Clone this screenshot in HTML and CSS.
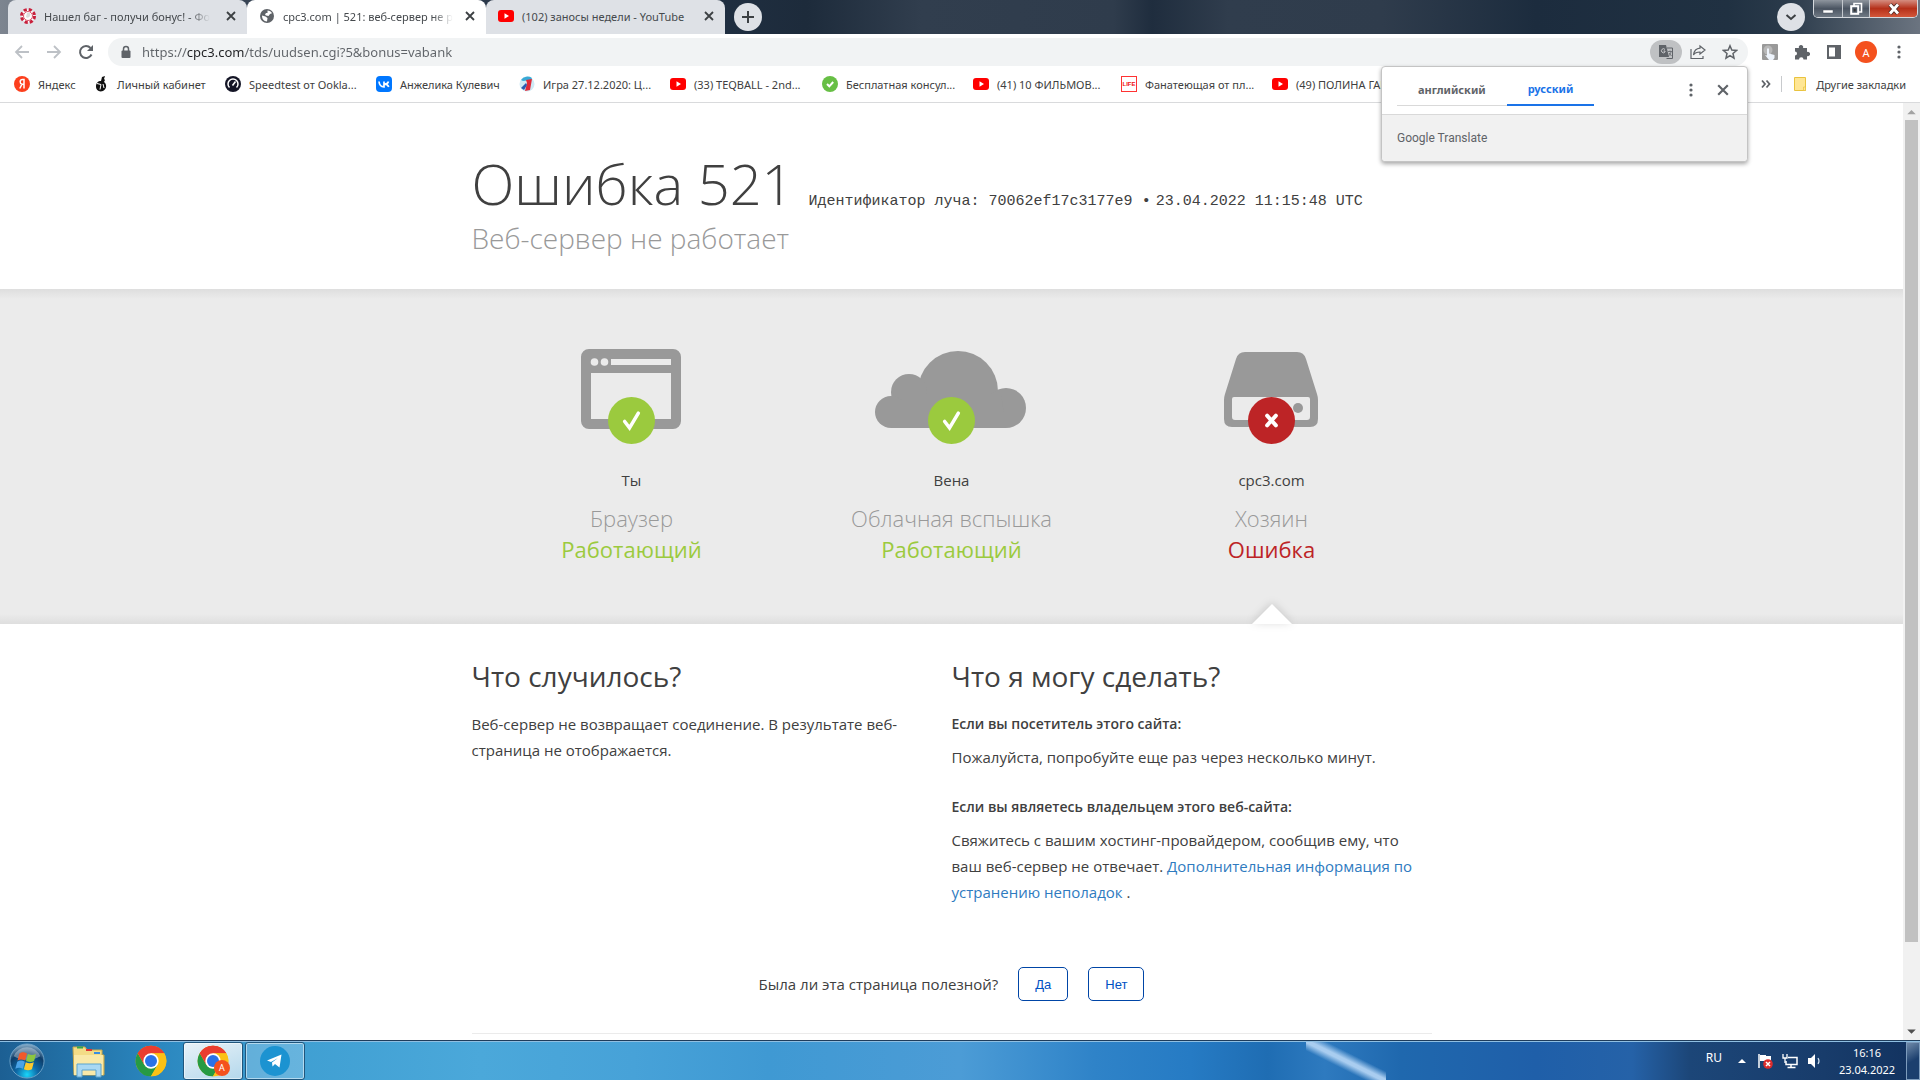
FILE: index.html
```html
<!DOCTYPE html>
<html lang="ru">
<head>
<meta charset="utf-8">
<title>cpc3.com | 521: веб-сервер не работает</title>
<link rel="stylesheet" href="styles.css">
</head>
<body>
<svg class="defs" aria-hidden="true">
  <symbol id="yt" viewBox="0 0 16 16"><rect y="2" width="16" height="12" rx="3" fill="#f00"/><path d="M6.500 5.300v5.400L11 8z" fill="#fff"/></symbol>
  <symbol id="close" viewBox="0 0 10 10"><path d="M1 1l8 8M9 1L1 9" stroke="currentColor" stroke-width="1.800" fill="none"/></symbol>
  <symbol id="dots" viewBox="0 0 4 16"><circle cx="2" cy="3" r="1.600"/><circle cx="2" cy="8" r="1.600"/><circle cx="2" cy="13" r="1.600"/></symbol>
  <symbol id="chrome" viewBox="0 0 48 48">
    <circle cx="24" cy="24" r="23" fill="#fbc116"/>
    <path d="M4.080 12.500A23 23 0 0 1 43.920 12.500H24z" fill="#ea3d2f"/>
    <path d="M4.080 12.500A23 23 0 0 0 24 47l9.960-17.250L24 24 14.040 29.750z" fill="#269a43"/>
    <path d="M4.080 12.500L14.040 29.750 24 12.500H43.920A23 23 0 0 0 4.080 12.500z" fill="#ea3d2f"/>
    <path d="M24 12.500H43.920A23 23 0 0 1 24 47l9.960-17.250z" fill="#fbc116"/>
    <circle cx="24" cy="24" r="11.500" fill="#fff"/><circle cx="24" cy="24" r="9" fill="#2a72e8"/>
  </symbol>
  <symbol id="ok" viewBox="0 0 48 48"><circle cx="24" cy="24" r="24" fill="#9bca3e"/><path d="M17 25l5 6.500L31 16.500" fill="none" stroke="#fff" stroke-width="3.600" stroke-linecap="round"/></symbol>
</svg>

<header class="browser">
  <div class="tabstrip">
    <div class="tabs" role="tablist">
      <div class="tab" role="tab">
        <svg class="ico" viewBox="0 0 16 16"><circle cx="8" cy="8" r="6.500" fill="#fff" stroke="#c8203c" stroke-width="3" stroke-dasharray="3.100 2"/><circle cx="8" cy="8" r="4.500" fill="#fff" stroke="#d8546a"/><path d="M7 5c3-1 4 1 3 3s-3 2-4 1" fill="#ddd"/></svg>
        <span class="tab-title fade">Нашел баг - получи бонус! - Фо</span>
        <button class="icon-btn" aria-label="Закрыть"><svg class="x"><use href="#close"/></svg></button>
      </div>
      <div class="tab active" role="tab">
        <svg class="ico" viewBox="0 0 16 16"><circle cx="8" cy="8" r="7" fill="#5f6368"/><path d="M8.500 2.500c2 0 3.500 1 4.500 2.800l-2 .7-1.500 2-2.500-.5L6 6.500l1-1.500h1.500zM3 7.500l3.500 1 2 1.500-.5 3.500c-3-.2-5-2.500-5-6z" fill="#fff"/></svg>
        <span class="tab-title fade">cpc3.com | 521: веб-сервер не р</span>
        <button class="icon-btn" aria-label="Закрыть"><svg class="x"><use href="#close"/></svg></button>
      </div>
      <div class="tab" role="tab">
        <svg class="ico"><use href="#yt"/></svg>
        <span class="tab-title">(102) заносы недели - YouTube</span>
        <button class="icon-btn" aria-label="Закрыть"><svg class="x"><use href="#close"/></svg></button>
      </div>
    </div>
    <button class="round-btn" aria-label="Новая вкладка"><svg class="s12" viewBox="0 0 12 12"><path d="M6 0v12M0 6h12" stroke="#3c4043" stroke-width="2"/></svg></button>
    <span class="spacer"></span>
    <button class="round-btn" aria-label="Поиск вкладок"><svg class="s12" viewBox="0 0 12 12"><path d="M1.500 4L6 8l4.500-4" fill="none" stroke="#3c4043" stroke-width="2"/></svg></button>
    <div class="win-controls">
      <button class="win" aria-label="Свернуть"><svg class="s16" viewBox="0 0 16 16"><rect x="3" y="9" width="10" height="3" fill="#fff" stroke="#4a525c" stroke-width=".5"/></svg></button>
      <button class="win mid" aria-label="Развернуть"><svg class="s16" viewBox="0 0 16 16" fill="none"><path d="M6 5V2.500h7.500V11H11" stroke="#fff" stroke-width="1.600"/><rect x="3.200" y="5.200" width="7" height="7.600" stroke="#fff" stroke-width="2"/><rect x="5.700" y="8" width="2" height="2.500" fill="#333"/></svg></button>
      <button class="win quit" aria-label="Закрыть окно"><svg class="s16" viewBox="0 0 16 16"><path d="M4 3.500l8 9M12 3.500l-8 9" stroke="#4b2a26" stroke-width="4.500"/><path d="M4 3.500l8 9M12 3.500l-8 9" stroke="#fff" stroke-width="2.800"/></svg></button>
    </div>
  </div>

  <div class="toolbar">
    <button class="icon-btn nav dim" aria-label="Назад"><svg class="s16" viewBox="0 0 16 16"><path d="M15 8H2M8 2L2 8l6 6" fill="none" stroke="currentColor" stroke-width="1.800"/></svg></button>
    <button class="icon-btn nav dim" aria-label="Вперед"><svg class="s16" viewBox="0 0 16 16"><path d="M1 8h13M8 2l6 6-6 6" fill="none" stroke="currentColor" stroke-width="1.800"/></svg></button>
    <button class="icon-btn nav" aria-label="Обновить"><svg class="s16" viewBox="0 0 16 16"><path d="M13.500 10.500A6 6 0 1 1 12.500 4" fill="none" stroke="currentColor" stroke-width="2"/><path d="M15 1v6H9z" fill="currentColor"/></svg></button>
    <div class="omnibox">
      <svg class="lock" viewBox="0 0 10 14"><path d="M2.500 6V4a2.500 2.500 0 0 1 5 0v2" fill="none" stroke="#5f6368" stroke-width="1.500"/><rect x="0.500" y="5.500" width="9" height="7.500" rx="1" fill="#5f6368"/></svg>
      <input class="url" type="text" aria-label="Адресная строка" value="https://cpc3.com/tds/uudsen.cgi?5&amp;bonus=vabank">
      <button class="icon-btn translate" aria-label="Перевести"><svg class="s16" viewBox="0 0 16 16"><path d="M1 1h7l3 12H1z" fill="#5f6368"/><path d="M9 4h5.500v10.500H8.500" fill="none" stroke="#5f6368"/><path d="M7 5.500A2 2 0 1 0 7 8V7H5.500" fill="none" stroke="#c9cacc"/><path d="M10 7.500h4M12 6.500v1.200M13 8c-.5 2-1.500 3-2.500 4M11 9l2.500 3" fill="none" stroke="#5f6368" stroke-width=".8"/></svg></button>
      <button class="icon-btn" aria-label="Поделиться"><svg class="s16" viewBox="0 0 16 16"><path d="M1 5v9.500h12V12M10 2l5 4-5 4V8c-3 0-5 .5-6.500 3C4 7 6 4.500 10 4.200z" fill="none" stroke="#5f6368" stroke-width="1.200"/></svg></button>
      <button class="icon-btn" aria-label="Добавить в закладки"><svg class="s16" viewBox="0 0 16 16"><path d="M8 1.800l1.800 4.300 4.700.4-3.500 3 1 4.600L8 11.600 4 14.100l1-4.600-3.500-3 4.700-.4z" fill="none" stroke="#5f6368" stroke-width="1.500"/></svg></button>
    </div>
    <div class="ext">
      <button class="icon-btn" aria-label="Кликер"><svg class="s16" viewBox="0 0 16 16"><rect width="16" height="16" rx="1" fill="#999"/><circle cx="6" cy="6" r="4.500" fill="#b8b8b8"/><path d="M5 4.500h2v5l5.500 1.500v3L11 16H7l-4-5 2 .5z" fill="#eef4fc"/></svg></button>
      <button class="icon-btn" aria-label="Расширения"><svg class="s16" viewBox="0 0 16 16"><path d="M1 4h4a2.200 2.200 0 1 1 4 0h4v4a2.200 2.200 0 1 1 0 4v3.500H9.500a2.200 2.200 0 0 0-4.500 0H1V11.500a2 2 0 0 0 0-4z" fill="#5f6368"/></svg></button>
      <button class="icon-btn" aria-label="Боковая панель"><svg class="s16" viewBox="0 0 16 16"><path d="M1 1h14v14H1zm2 2.500v9h6v-9z" fill="#5f6368" fill-rule="evenodd"/></svg></button>
      <button class="avatar">A</button>
      <button class="icon-btn" aria-label="Меню"><svg class="dots"><use href="#dots"/></svg></button>
    </div>
  </div>

  <nav class="bookmarks">
    <div class="marks">
      <a href="#"><svg class="ico" viewBox="0 0 16 16"><circle cx="8" cy="8" r="8" fill="#fc3f1d"/><path d="M10 12.500v-9H8.500C5.500 3.500 5.500 7.500 8 8.200h2M8 8.200l-2.200 4.300" fill="none" stroke="#fff" stroke-width="1.500"/></svg>Яндекс</a>
      <a href="#"><svg class="ico" viewBox="0 0 16 16"><path d="M9 1l3-1-1 3 1 1-1 2c3 2 3 7-1 9-4 1.500-7-1-7-4.500S5 5 8 5z" fill="#111"/><path d="M4 7.500l4 1-1 5M10 8l1 4" stroke="#fff" fill="none"/></svg>Личный кабинет</a>
      <a href="#"><svg class="ico" viewBox="0 0 16 16"><circle cx="8" cy="8" r="8" fill="#141526"/><path d="M4.500 11.500a5 5 0 1 1 7 0" fill="none" stroke="#fff" stroke-width="1.500"/><path d="M7.500 9.500l3-4" stroke="#fff" stroke-width="1.500"/></svg>Speedtest от Ookla...</a>
      <a href="#"><svg class="ico" viewBox="0 0 16 16"><rect width="16" height="16" rx="4" fill="#07f"/><path d="M3 5.500c.3 3.500 2 5.300 5 5.300v-5.300M12.500 5.500c-.5 1.500-2 2.600-4 2.600 2.500 0 3.500 1.200 4.300 2.700" fill="none" stroke="#fff" stroke-width="1.700"/></svg>Анжелика Кулевич</a>
      <a href="#"><svg class="ico" viewBox="0 0 16 16"><circle cx="8" cy="8" r="7.500" fill="#cfeaf5"/><path d="M2 4a8 8 0 0 1 11-2l-1 2-8 1z" fill="#39a9d6"/><path d="M7 4l6-1-2 11-5 1 2-8z" fill="#e02a38"/><path d="M2 12l5-5 1 2-3 5z" fill="#2b5bb0"/></svg>Игра 27.12.2020: Ц...</a>
      <a href="#"><svg class="ico"><use href="#yt"/></svg>(33) TEQBALL - 2nd...</a>
      <a href="#"><svg class="ico" viewBox="0 0 16 16"><circle cx="8" cy="8" r="8" fill="#67bf45"/><path d="M5 8l2.300 2.300L11.200 6" fill="none" stroke="#fff" stroke-width="2"/></svg>Бесплатная консул...</a>
      <a href="#"><svg class="ico"><use href="#yt"/></svg>(41) 10 ФИЛЬМОВ...</a>
      <a href="#"><span class="life">LIFE</span>Фанатеющая от пл...</a>
      <a href="#"><svg class="ico"><use href="#yt"/></svg>(49) ПОЛИНА ГАГ...</a>
    </div>
    <button class="icon-btn more" aria-label="Ещё закладки"><svg class="s12" viewBox="0 0 12 12"><path d="M2 2.500L5 6 2 9.500M6.500 2.500l3 3.500-3 3.500" fill="none" stroke="#5f6368" stroke-width="1.800"/></svg></button>
    <a class="other" href="#"><svg class="ico" viewBox="0 0 16 16"><path d="M2.500 1.500h11v13h-11z" fill="#ffe694" stroke="#e9c33f"/><path d="M11.500 11h2v3.500h-2z" fill="#ffe694" stroke="#e9c33f" stroke-width=".7"/></svg>Другие закладки</a>
  </nav>

  <section class="popup" aria-label="Google Translate">
    <div class="popup-head">
      <div class="langs">
        <button class="lang">английский</button>
        <button class="lang on">русский</button>
      </div>
      <button class="icon-btn" aria-label="Параметры"><svg class="dots"><use href="#dots"/></svg></button>
      <button class="icon-btn" aria-label="Закрыть"><svg class="s12"><use href="#close"/></svg></button>
    </div>
    <p class="popup-body">Google Translate</p>
  </section>
</header>

<div class="viewport">
  <main class="page">
    <header class="wrap head">
      <h1><span>Ошибка 521</span><small>Идентификатор луча: 70062ef17c3177e9</small><small class="dot">•</small><small>23.04.2022 11:15:48 UTC</small></h1>
      <p class="sub">Веб-сервер не работает</p>
    </header>

    <section class="status">
      <div class="wrap cols">
        <div class="col">
          <div class="pic">
            <svg class="art" viewBox="0 0 160 88"><path d="M38 0h84a8 8 0 0 1 8 8v64a8 8 0 0 1-8 8H38a8 8 0 0 1-8-8V8a8 8 0 0 1 8-8zM40 24v46h80V24zM60 10v6h60v-6z" fill="#999" fill-rule="evenodd"/><circle cx="43.500" cy="13" r="3.800" fill="#ebebeb"/><circle cx="53.500" cy="13" r="3.800" fill="#ebebeb"/></svg>
            <svg class="badge"><use href="#ok"/></svg>
          </div>
          <span class="who">Ты</span>
          <h3>Браузер</h3>
          <span class="state">Работающий</span>
        </div>
        <div class="col">
          <div class="pic">
            <svg class="art" viewBox="0 0 160 88"><g fill="#999"><circle cx="87" cy="42" r="40"/><circle cx="38" cy="43" r="18"/><circle cx="20" cy="63" r="16"/><circle cx="135" cy="59" r="20"/><path d="M20 79V60l20-15h90l5 34z"/></g></svg>
            <svg class="badge"><use href="#ok"/></svg>
          </div>
          <span class="who">Вена</span>
          <h3>Облачная вспышка</h3>
          <span class="state">Работающий</span>
        </div>
        <div class="col fail">
          <div class="pic">
            <svg class="art" viewBox="0 0 160 88"><path d="M54 3h52q7 0 9 7l11 35q1 3 1 6v19q0 8-8 8H41q-8 0-8-8V51q0-3 1-6l11-35q2-7 9-7zM43 48q-2 0-2 2v18q0 3 3 3h72q3 0 3-3V50q0-2-2-2z" fill="#999" fill-rule="evenodd"/><circle cx="107" cy="59" r="5" fill="#999"/></svg>
            <svg class="badge" viewBox="0 0 48 48"><circle cx="24" cy="24" r="24" fill="#bd2426"/><path d="M19.500 19l9 10M28.500 19l-9 10" stroke="#fff" stroke-width="4" stroke-linecap="round"/></svg>
          </div>
          <span class="who">cpc3.com</span>
          <h3>Хозяин</h3>
          <span class="state">Ошибка</span>
        </div>
      </div>
    </section>

    <section class="wrap info">
      <div>
        <h2>Что случилось?</h2>
        <p>Веб-сервер не возвращает соединение. В результате веб-страница не отображается.</p>
      </div>
      <div>
        <h2>Что я могу сделать?</h2>
        <h4>Если вы посетитель этого сайта:</h4>
        <p>Пожалуйста, попробуйте еще раз через несколько минут.</p>
        <h4>Если вы являетесь владельцем этого веб-сайта:</h4>
        <p>Свяжитесь с вашим хостинг-провайдером, сообщив ему, что ваш веб-сервер не отвечает. <a href="#">Дополнительная информация по устранению неполадок</a> .</p>
      </div>
    </section>

    <footer class="wrap feedback">
      <span>Была ли эта страница полезной?</span>
      <button>Да</button>
      <button>Нет</button>
    </footer>
  </main>
  <div class="scrollbar" aria-hidden="true">
    <svg class="arrow" viewBox="0 0 16 16"><path d="M4 10.500l4-4 4 4z" fill="#a3a3a3"/></svg>
    <div class="track"><div class="thumb"></div></div>
    <svg class="arrow" viewBox="0 0 16 16"><path d="M4 6l4 4 4-4z" fill="#505050"/></svg>
  </div>
</div>

<footer class="taskbar">
  <button class="task" aria-label="Пуск"><svg class="s36" viewBox="0 0 38 38"><defs><radialGradient id="orb" cx=".5" cy=".9" r=".9"><stop offset="0" stop-color="#19d6fa"/><stop offset=".35" stop-color="#0e6aa8"/><stop offset=".7" stop-color="#0d3c68"/><stop offset="1" stop-color="#8fb4cf"/></radialGradient></defs><circle cx="19" cy="19" r="18" fill="url(#orb)" stroke="#6fa3c8"/><path d="M5 14a15 15 0 0 1 28 0c-8 5-20 5-28 0z" fill="#fff" opacity=".35"/><path d="M11 11c3-2 5-1.500 8 0l-2 7.500c-3-1.500-5-1.500-8 0z" fill="#f0592a"/><path d="M20 11.500c3 1.500 5 1.500 8.500 0l-2 7.500c-3 1.500-5 1.500-8.500 0z" fill="#8cc63f"/><path d="M8.700 19.700c3-1.500 5-1.500 8 0l-2 7.500c-3-1.500-5-1.500-8 0z" fill="#4aa3e8"/><path d="M17.700 20.200c3 1.500 5 1.500 8.500 0l-2 7.500c-3 1.500-5 1.500-8.500 0z" fill="#fdc92d"/></svg></button>
  <button class="task" aria-label="Проводник"><svg class="s36" viewBox="0 0 36 36"><path d="M2 4h12l2 3h15v5h2v20H3z" fill="#f3dc86" stroke="#c9a94c"/><path d="M6 3.500h6v2H6z" fill="#36a64a"/><path d="M15 6h6v2h-6z" fill="#d33"/><path d="M23 9h6v2h-6z" fill="#3a8ee0"/><path d="M3 12h29v20H3z" fill="#f9e9a8"/><path d="M6 21h24v13h-5v-7H11v7H6z" fill="#a9d8f3" stroke="#5ba4cf"/></svg></button>
  <button class="task" aria-label="Google Chrome"><svg class="s32"><use href="#chrome"/></svg></button>
  <button class="task open front" aria-label="Google Chrome, открыто"><svg class="s32"><use href="#chrome"/></svg><span class="mini">A</span></button>
  <button class="task open" aria-label="Telegram"><svg class="s32" viewBox="0 0 32 32"><circle cx="16" cy="16" r="15" fill="#1c93d1"/><path d="M8 15.500L22.500 9.500l-2 13-4.500-3.500-2.500 2.500-.5-4 6-4.500-7 4z" fill="#fff"/></svg></button>
  <span class="spacer"></span>
  <span class="ru">RU</span>
  <svg class="s12 tray" viewBox="0 0 12 12"><path d="M2 8l4-4 4 4z" fill="#fff"/></svg>
  <svg class="s16 tray" viewBox="0 0 16 16"><path d="M2 1v14" stroke="#fff" stroke-width="1.500"/><path d="M3 2h6v1h5v6H8V8H3z" fill="#fff"/><circle cx="11" cy="11" r="4.800" fill="#dc2c2c"/><path d="M9 9l4 4M13 9l-4 4" stroke="#fff" stroke-width="1.500"/></svg>
  <svg class="s16 tray" viewBox="0 0 16 16" fill="none" stroke="#fff"><path d="M6 4.500h9v7H4V8M9 12v2M5.500 14.500h8" stroke-width="1.500"/><path d="M1 1v4h4V1M3 5v5" stroke-width="1.300"/></svg>
  <svg class="s16 tray" viewBox="0 0 16 16"><path d="M1 5h3l4-4v14l-4-4H1z" fill="#fff"/><path d="M11 5q2 3 0 6" fill="none" stroke="#cfe0f0" stroke-width="1.200"/></svg>
  <div class="clock"><span>16:16</span><span>23.04.2022</span></div>
  <button class="peek" aria-label="Свернуть все окна"></button>
</footer>
</body>
</html>
```
FILE: styles.css
```css
* { box-sizing: border-box; }
body {
  margin: 0;
  height: 100vh;
  display: flex;
  flex-direction: column;
  overflow: hidden;
  background: #fff;
  color: #404040;
  font-family: "Open Sans", "Noto Sans", sans-serif;
  font-size: 15px;
}
h1, h2, h3, h4, p { margin: 0; font-weight: 400; }
button { margin: 0; padding: 0; border: 0; background: none; font: inherit; color: inherit; }
a { text-decoration: none; color: inherit; }
svg { display: block; flex: none; }
.defs { position: absolute; width: 0; height: 0; }
.ico, .s16 { width: 16px; height: 16px; flex: none; }
.s12 { width: 12px; height: 12px; }
.s32 { width: 32px; height: 32px; }
.s36 { width: 36px; height: 36px; }
.x { width: 10px; height: 10px; }
.dots { width: 4px; height: 16px; fill: #5f6368; }
.spacer { flex: 1; }
.icon-btn { display: flex; align-items: center; justify-content: center; color: #5f6368; }

/* Browser frame */
.browser { position: relative; flex: none; font-family: "Noto Sans", sans-serif; font-size: 11px; z-index: 1; }
.tabstrip {
  display: flex;
  align-items: center;
  height: 34px;
  padding: 0 2px 0 8px;
  background: linear-gradient(90deg, #7d8590 0, #3a4656 10%, #1f2e40 38%, #1d2b3b 42%, #313e4e 48%, #2f3c4c 58%, #1f2d3e 60%, #303d4d 64%, #2f3c4c 72%, #1c2c3e 80%, #203142 90%, #2a3a4a 93%, #6b7480 100%);
}
.tabs { display: flex; align-self: stretch; }
.tab {
  display: flex;
  align-items: center;
  width: 239px;
  padding: 0 8px 2px 12px;
  background: #dee1e6;
  color: #45494d;
  border-radius: 8px 8px 0 0;
}
.tab.active { background: #fff; }
.tab-title { margin: 0 auto 0 8px; white-space: nowrap; }
.fade { mask-image: linear-gradient(90deg, #000 88%, transparent); }
.tab .icon-btn { width: 16px; height: 16px; color: #3c4043; }
.round-btn { display: flex; align-items: center; justify-content: center; width: 28px; height: 28px; margin-left: 9px; border-radius: 50%; background: #dee1e6; }
.win-controls {
  display: flex;
  align-self: flex-start;
  height: 18px;
  margin-left: 8px;
  border: 1px solid #d5d9de;
  border-top: 0;
  border-radius: 0 0 5px 5px;
  overflow: hidden;
}
.win { display: flex; align-items: center; justify-content: center; width: 28px; background: linear-gradient(#8e959e, #4b5562 50%, #6f7984); }
.win.mid { border-left: 1px solid #c3c8ce; border-right: 1px solid #c3c8ce; }
.win.quit { width: 47px; background: linear-gradient(#d58d80, #b5301a 50%, #d3573a); }

.toolbar { display: flex; align-items: center; height: 36px; padding: 0 12px; background: #fff; }
.nav { width: 20px; height: 20px; margin-right: 12px; }
.nav.dim { color: #bdc1c6; }
.omnibox {
  display: flex;
  align-items: center;
  flex: 1;
  height: 28px;
  padding: 0 10px 0 13px;
  gap: 16px;
  border-radius: 14px;
  background: #f1f3f4;
}
.lock { width: 10px; height: 14px; }
.url {
  flex: 1;
  min-width: 0;
  height: 24px;
  margin-left: -5px;
  padding: 0;
  border: 0;
  outline: 0;
  /* the host name is darker than the rest of the address */
  background: linear-gradient(90deg, #5f6368 45px, #202124 45px 103px, #5f6368 103px);
  background-clip: text;
  color: transparent;
  font-family: "Noto Sans", sans-serif;
  font-size: 13px;
}
.translate { width: 32px; height: 24px; margin: 0 -8px; border-radius: 12px; background: #bfc1c3; }
.ext { display: flex; align-items: center; gap: 16px; margin-left: 14px; }
.avatar { width: 22px; height: 22px; margin: 0 -3px; border-radius: 50%; background: #f4511e; color: #fff; text-align: center; }
.ext .icon-btn:last-child { width: 18px; }

.bookmarks { display: flex; align-items: center; height: 33px; padding: 0 14px 4px; border-bottom: 1px solid #d9dadc; background: #fff; }
.marks {
  display: grid;
  flex: 1;
  min-width: 0;
  overflow: hidden;
  grid-template-columns: 79px 132px 151px 143px 151px 152px 151px 148px 151px 1fr;
}
.bookmarks a { display: flex; align-items: center; gap: 8px; white-space: nowrap; }
.life { width: 16px; height: 16px; border: 1px solid #f33; color: #e11; font: 700 6px/14px "Liberation Sans", sans-serif; text-align: center; }
.more { width: 30px; height: 16px; }
.bookmarks .other { padding-left: 10px; border-left: 1px solid #c8cacd; }

.popup {
  position: absolute;
  top: 66px;
  right: 172px;
  width: 367px;
  background: #fff;
  border: 1px solid #c4c4c4;
  border-radius: 4px;
  box-shadow: 0 2px 4px rgba(0, 0, 0, .35);
}
.popup-head { display: flex; align-items: center; height: 48px; padding: 0 18px 2px 15px; border-bottom: 1px solid #d9d9d9; gap: 24px; }
.langs { display: flex; flex: 1; font-weight: 700; color: #5f6368; }
.lang { height: 32px; padding: 0 21px; border-bottom: 1px solid #d9d9d9; }
.lang.on { border-bottom: 2px solid #1a73e8; color: #1a73e8; }
.popup-body { padding: 13px 15px; height: 46px; background: #f1f1f1; border-radius: 0 0 4px 4px; color: #5f6368; font: 12px/20px Roboto, sans-serif; }

/* Page */
.viewport { display: flex; flex: 1; min-height: 0; }
.page { flex: 1; overflow: hidden; }
.wrap { max-width: 960px; margin: 0 auto; }
.head { height: 186px; padding-top: 44px; }
h1 { display: flex; align-items: baseline; font-size: 56px; font-weight: 300; line-height: 72px; white-space: nowrap; }
h1 span { margin-right: 15px; }
small { font: 15px "Liberation Mono", monospace; }
.dot { margin: 0 5px 0 9px; }
.sub { font-size: 28px; font-weight: 300; line-height: 39px; color: #999; }

.status {
  height: 335px;
  padding-top: 60px;
  background: linear-gradient(#dedede, #ebebeb 10px, #ebebeb 325px, #dedede);
}
.cols { display: grid; grid-template-columns: repeat(3, 1fr); height: 100%; }
.col { position: relative; display: flex; flex-direction: column; align-items: center; }
.pic { position: relative; width: 162px; height: 95px; }
.art { width: 160px; height: 88px; }
.badge { position: absolute; left: 57px; top: 48px; width: 47px; height: 47px; }
.who { margin-top: 24px; line-height: 24px; }
h3 { margin-top: 11px; font-size: 22px; font-weight: 300; line-height: 31px; color: #999; }
.state { font-size: 22px; line-height: 31px; color: #9bca3e; }
.fail .state { color: #bd2426; }
.fail::after {
  content: "";
  position: absolute;
  bottom: 0;
  border: 20px solid transparent;
  border-top: 0;
  border-bottom-color: #fff;
  filter: drop-shadow(0 -1px 4px rgba(0, 0, 0, .15));
}

.info { display: grid; grid-template-columns: 1fr 1fr; padding-top: 30px; line-height: 26px; }
.info > div { padding-right: 15px; }
h2 { font-size: 28px; line-height: 44px; margin-bottom: 13px; }
h4 { font-size: 14px; font-weight: 600; line-height: 26px; margin-bottom: 7px; }
.info p { margin-bottom: 24px; }
.info a { color: #2f7bbf; }
.feedback {
  display: flex;
  align-items: center;
  justify-content: center;
  gap: 20px;
  margin-top: 38px;
  padding-bottom: 32px;
  border-bottom: 1px solid #ebebeb;
}
.feedback button { height: 34px; padding: 0 16px; border: 1px solid #0045a6; border-radius: 5px; color: #0051c3; font: 13px "Liberation Sans", sans-serif; }

.scrollbar { display: flex; flex-direction: column; width: 17px; background: #f1f1f1; }
.arrow { width: 17px; height: 17px; }
.track { flex: 1; padding: 0 2px; }
.thumb { height: 91%; background: #c1c1c1; }

/* Taskbar */
.taskbar {
  display: flex;
  align-items: center;
  flex: none;
  height: 40px;
  border-top: 1px solid #1f3d5c;
  box-shadow: inset 0 1px 0 #8fbfe2;
  background:
    linear-gradient(to top right, transparent 38%, #a9cdf0 48%, #a9cdf0 52%, transparent 62%) 71% 0 / 80px 40px no-repeat,
    linear-gradient(90deg, #1c5f93 0, #2a86be 8%, #3f9fd2 15%, #4ba8da 25%, #47a2d8 33%, #3f99d3 40%, #4c9cd6 50%, #2f83c8 57%, #267bc4 62%, #1f6db3 66%, #2e7abf 69%, #1f68ae 73%, #1f5fa9 80%, #2562a8 85%, #1c4678 88%, #183c6b 95%, #12325f 100%);
  color: #fff;
  font-family: "Noto Sans", sans-serif;
  font-size: 12px;
}
.task { position: relative; display: flex; align-items: center; justify-content: center; height: 38px; width: 60px; margin-right: 2px; }
.task:first-child { width: 54px; margin-right: 5px; }
.task.open { border: 1px solid #1f567d; border-radius: 3px; background: rgba(150, 205, 235, .45); box-shadow: inset 0 0 0 1px rgba(255, 255, 255, .5); }
.task.front { background: linear-gradient(160deg, #e8f2f8, #b4d8ec); }
.mini { position: absolute; right: 12px; bottom: 3px; width: 16px; height: 16px; border-radius: 50%; background: #f4511e; font-size: 9px; line-height: 16px; }
.ru { margin: 0 14px 6px 0; }
.tray { margin-right: 9px; }
.clock { display: flex; flex-direction: column; align-items: center; width: 68px; margin-left: 1px; line-height: 17px; font-size: 11px; }
.peek { width: 14px; height: 38px; margin-left: 5px; border: 1px solid #7d9cbd; background: linear-gradient(150deg, #6f89a8, #1b3f6e 50%); }
```
